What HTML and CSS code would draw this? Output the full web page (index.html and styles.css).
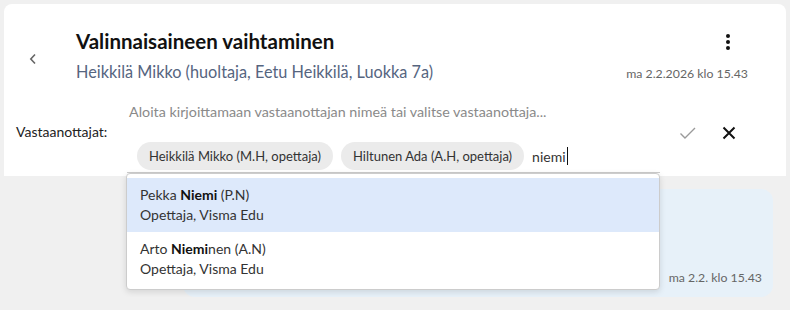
FILE: index.html
```html
<!DOCTYPE html>
<html lang="fi">

<head>
   <meta charset="UTF-8">
   <meta name="viewport" content="width=device-width, initial-scale=1.0">
   <title>Valinnaisaineen vaihtaminen</title>

   <link rel="stylesheet" href="styles.css">
</head>

<body>
   <div class="card">
      <!-- Message header -->
      <div class="header">
         <button class="back-btn" aria-label="Takaisin">
            <svg width="10" height="12" viewBox="0 0 10 12">
               <path d="M7 1.5 L2.8 6 L7 10.5" fill="none" stroke="#666" stroke-width="1.6" />
            </svg>
         </button>
         <div class="header-main">
            <h1 class="title">Valinnaisaineen vaihtaminen</h1>
            <div class="subtitle">Heikkilä Mikko (huoltaja, Eetu Heikkilä, Luokka 7a)</div>
         </div>
         <div class="header-side">
            <button class="menu-btn" aria-label="Valikko">
               <svg width="6" height="18" viewBox="0 0 6 18">
                  <circle cx="3" cy="3" r="2" fill="#111" />
                  <circle cx="3" cy="9" r="2" fill="#111" />
                  <circle cx="3" cy="15" r="2" fill="#111" />
               </svg>
            </button>
            <div class="header-date">ma 2.2.2026 klo 15.43</div>
         </div>
      </div>

      <!-- Recipients -->
      <div class="recipients">
         <label class="rec-label" for="recInput">Vastaanottajat:</label>
         <div class="rec-field">
            <div class="rec-placeholder">Aloita kirjoittamaan vastaanottajan nimeä tai valitse vastaanottaja...</div>
            <div class="chips">
               <span class="chip">Heikkilä Mikko (M.H, opettaja)</span>
               <span class="chip">Hiltunen Ada (A.H, opettaja)</span>
               <span class="typed" id="recInput">niemi<span class="caret"></span></span>
            </div>

            <!-- Suggestions menu -->
            <ul class="suggestions">
               <li class="suggestion active">
                  <div>Pekka <b>Niemi</b> (P.N)</div>
                  <div>Opettaja, Visma Edu</div>
               </li>
               <li class="suggestion">
                  <div>Arto <b>Niemi</b>nen (A.N)</div>
                  <div>Opettaja, Visma Edu</div>
               </li>
            </ul>
         </div>
         <div class="rec-actions">
            <button class="icon-btn" aria-label="Hyväksy">
               <svg width="18" height="14" viewBox="0 0 18 14">
                  <path d="M1.5 7.5 L6 12 L16 2" fill="none" stroke="#9a9a9a" stroke-width="1.4" />
               </svg>
            </button>
            <button class="icon-btn" aria-label="Peruuta">
               <svg width="14" height="14" viewBox="0 0 14 14">
                  <path d="M1.5 1.5 L12.5 12.5 M12.5 1.5 L1.5 12.5" fill="none" stroke="#111" stroke-width="2" />
               </svg>
            </button>
         </div>
      </div>
   </div>

   <!-- Message thread -->
   <div class="thread">
      <div class="bubble">
         <div class="bubble-date">ma 2.2. klo 15.43</div>
      </div>
   </div>
</body>

</html>
```

FILE: styles.css
```css
/* General body styling */
body {
   font-family: Lato, "Open Sans", sans-serif;
   background-color: #f0f0f0;
   margin: 0;
   color: #333;
}

button {
   background: none;
   border: none;
   padding: 0;
   cursor: pointer;
   display: flex;
   align-items: center;
   justify-content: center;
}

/* Card */
.card {
   background-color: #ffffff;
   margin: 4px 4px 0 4px;
   border-radius: 8px 8px 0 0;
   height: 172px;
}

/* Header */
.header {
   display: flex;
   padding: 24px 38px 0 0;
}

.back-btn {
   width: 58px;
   height: 20px;
   margin-top: 21px;
   margin-right: 14px;
}

.header-main {
   flex: 1;
}

.title {
   font-size: 20.5px;
   line-height: 26px;
   font-weight: 700;
   color: #111;
   margin: 0;
}

.subtitle {
   font-size: 16.3px;
   line-height: 22px;
   color: #56657f;
   margin-top: 7px;
}

.header-side {
   display: flex;
   flex-direction: column;
   align-items: flex-end;
}

.menu-btn {
   width: 20px;
   height: 24px;
   margin-top: 2px;
   margin-right: 10px;
}

.header-date {
   font-size: 12.3px;
   line-height: 20px;
   color: #666;
   margin-top: 10px;
}

/* Recipients row */
.recipients {
   display: flex;
   align-items: flex-start;
   margin-top: 18px;
}

.rec-label {
   width: 123px;
   padding-left: 12px;
   box-sizing: border-box;
   font-size: 14px;
   line-height: 20px;
   margin-top: 20px;
   color: #222;
}

.rec-field {
   position: relative;
   width: 533px;
   border-bottom: 1px solid #ccc;
   padding-bottom: 2px;
}

.rec-placeholder {
   font-size: 14.3px;
   line-height: 20px;
   color: #8a8a8a;
   padding-left: 2px;
}

.chips {
   display: flex;
   align-items: center;
   gap: 8px;
   margin-top: 20px;
   padding-left: 10px;
}

.chip {
   background-color: #ebebeb;
   border-radius: 14px;
   height: 28px;
   line-height: 28px;
   padding: 0 12px;
   font-size: 13px;
   color: #333;
}

.typed {
   font-size: 14px;
   color: #333;
   display: flex;
   align-items: center;
}

.caret {
   display: inline-block;
   width: 1px;
   height: 18px;
   background-color: #111;
   margin-left: 1px;
}

.rec-actions {
   display: flex;
   align-items: center;
   gap: 25px;
   margin-left: 19px;
   margin-top: 21px;
}

.icon-btn {
   height: 20px;
}

/* Suggestions menu */
.suggestions {
   position: absolute;
   top: 100%;
   left: -1px;
   width: 534px;
   box-sizing: border-box;
   margin: 1px 0 0 0;
   padding: 4px 0 3px 0;
   list-style: none;
   background-color: #ffffff;
   border: 1px solid #ccc;
   border-radius: 4px;
   box-shadow: 0 2px 6px rgba(0, 0, 0, 0.12);
   z-index: 2;
}

.suggestion {
   padding: 7px 13px;
   font-size: 14px;
   line-height: 20px;
   color: #333;
}

.suggestion b {
   color: #111;
}

.suggestion.active {
   background-color: #dde9fb;
}

/* Thread */
.thread {
   padding: 13px 17px 0 183px;
}

.bubble {
   background-color: #e7f1f9;
   border-radius: 12px;
   height: 108px;
   display: flex;
   align-items: flex-end;
   justify-content: flex-end;
}

.bubble-date {
   font-size: 12.3px;
   line-height: 20px;
   color: #666;
   padding: 0 11px 9px 0;
}
```
